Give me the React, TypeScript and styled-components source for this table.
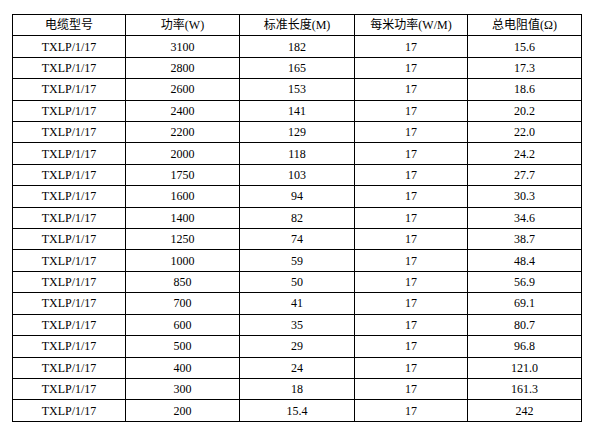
import styled, { createGlobalStyle } from "styled-components";

const GlobalStyle = createGlobalStyle`
  html, body {
    margin: 0;
    padding: 0;
    background: #fff;
  }
`;

const Page = styled.div`
  padding: 14px 0 0 12px;
`;

const Table = styled.table`
  border-collapse: collapse;
  width: 569px;
  height: 408px;
  table-layout: fixed;
  font-family: "Liberation Serif", "Noto Sans CJK SC", serif;
  font-size: 12px;
  color: #000;
`;

const Cell = styled.td<{ $head?: boolean }>`
  border: 1px solid #000;
  text-align: center;
  vertical-align: middle;
  padding: 0;
  line-height: 14px;
  font-family: ${({ $head }) =>
    $head
      ? `"Liberation Serif", "Noto Sans CJK SC", serif`
      : `"Liberation Serif", serif`};
`;

const heads = ["电缆型号", "功率(W)", "标准长度(M)", "每米功率(W/M)", "总电阻值(Ω)"];
const widths = [113, 114, 115, 113, 114];

const rows: [string, string, string, string][] = [
  ["3100", "182", "17", "15.6"],
  ["2800", "165", "17", "17.3"],
  ["2600", "153", "17", "18.6"],
  ["2400", "141", "17", "20.2"],
  ["2200", "129", "17", "22.0"],
  ["2000", "118", "17", "24.2"],
  ["1750", "103", "17", "27.7"],
  ["1600", "94", "17", "30.3"],
  ["1400", "82", "17", "34.6"],
  ["1250", "74", "17", "38.7"],
  ["1000", "59", "17", "48.4"],
  ["850", "50", "17", "56.9"],
  ["700", "41", "17", "69.1"],
  ["600", "35", "17", "80.7"],
  ["500", "29", "17", "96.8"],
  ["400", "24", "17", "121.0"],
  ["300", "18", "17", "161.3"],
  ["200", "15.4", "17", "242"],
];

export default function App() {
  return (
    <>
      <GlobalStyle />
      <Page>
        <Table>
          <colgroup>
            {widths.map((w, i) => (
              <col key={i} style={{ width: w }} />
            ))}
          </colgroup>
          <tbody>
            <tr>
              {heads.map((h) => (
                <Cell key={h} $head>
                  {h}
                </Cell>
              ))}
            </tr>
            {rows.map((r, i) => (
              <tr key={i}>
                <Cell>TXLP/1/17</Cell>
                {r.map((v, j) => (
                  <Cell key={j}>{v}</Cell>
                ))}
              </tr>
            ))}
          </tbody>
        </Table>
      </Page>
    </>
  );
}
